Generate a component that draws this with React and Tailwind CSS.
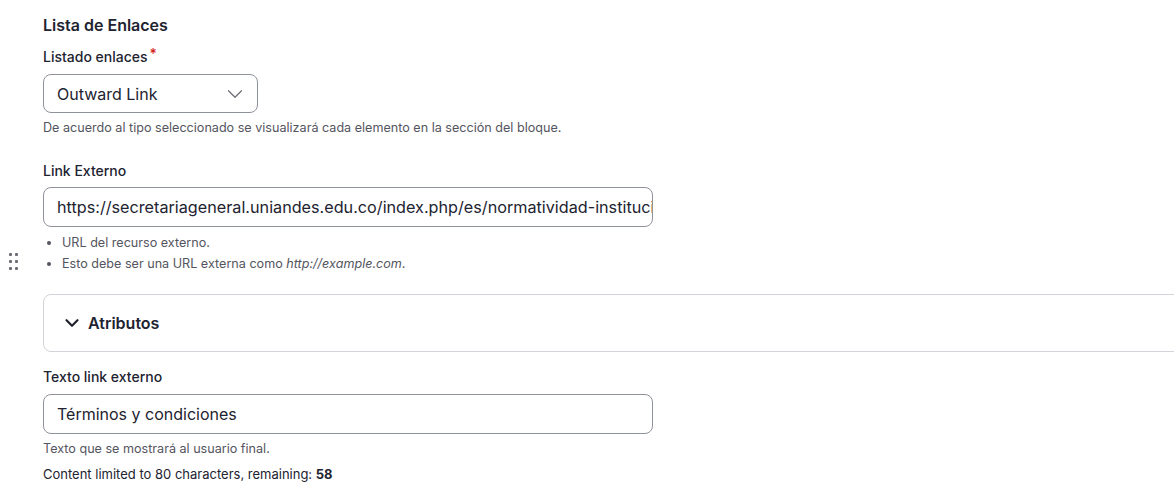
import { ChevronDown } from 'lucide-react'

const Help = ({ children, className = '' }) => (
  <div className={`text-[12.6px] leading-[18px] text-[#545560] ${className}`}>{children}</div>
)

const Label = ({ children, required }) => (
  <div className="text-[14px] leading-[20px] font-medium text-[#222330] flex items-start">
    {children}
    {required && <span className="text-[#d72222] text-[14px] leading-[14px] ml-[2px]">*</span>}
  </div>
)

const DragHandle = () => (
  <div className="grid grid-cols-2 gap-x-[3px] gap-y-[4px] w-[9px]">
    {[0, 1, 2, 3, 4, 5].map((i) => (
      <span key={i} className="block w-[3px] h-[3px] rounded-[1px] bg-[#6b6c74]" />
    ))}
  </div>
)

export default function App() {
  return (
    <div className="min-h-[500px] bg-white font-['Inter','Liberation_Sans',sans-serif] text-[#222330] overflow-hidden">
      <div className="flex">
        {/* drag column */}
        <div className="w-[43px] shrink-0 pl-[9px] pt-[253px]">
          <DragHandle />
        </div>

        {/* form column */}
        <div className="flex-1 pt-[15px]">
          <h4 className="text-[16px] leading-[20px] font-semibold text-[#222330]">Lista de Enlaces</h4>

          <div className="mt-[12px]">
            <Label required>Listado enlaces</Label>
            <div className="mt-[7px] w-[215px] h-[39px] border border-[#8e929c] rounded-[8px] flex items-center justify-between pl-[13px] pr-[9px]">
              <span className="text-[16px] text-[#222330]">Outward Link</span>
              <ChevronDown className="w-[26px] h-[26px] text-[#6b6c74]" strokeWidth={1.1} />
            </div>
            <Help className="mt-[6px]">De acuerdo al tipo seleccionado se visualizará cada elemento en la sección del bloque.</Help>
          </div>

          <div className="mt-[24px]">
            <Label>Link Externo</Label>
            <div className="mt-[6px] w-[610px] h-[40px] border border-[#8e929c] rounded-[8px] flex items-center pl-[13px] overflow-hidden">
              <span className="text-[16.2px] text-[#222330] whitespace-nowrap">
                https://secretariageneral.uniandes.edu.co/index.php/es/normatividad-institucional
              </span>
            </div>
            <ul className="mt-[5px] text-[12.6px] leading-[21px] text-[#545560] list-disc pl-[19px]">
              <li>URL del recurso externo.</li>
              <li>
                Esto debe ser una URL externa como <em>http://example.com</em>.
              </li>
            </ul>
          </div>

          <div className="mt-[20px] -mr-[8px] h-[58px] border border-[#d3d4d9] rounded-[8px] flex items-center pl-[19px]">
            <ChevronDown className="w-[22px] h-[22px] text-[#222330] -ml-[2px]" strokeWidth={2.4} />
            <span className="ml-[5px] text-[16px] font-semibold text-[#222330]">Atributos</span>
          </div>

          <div className="mt-[15px]">
            <Label>Texto link externo</Label>
            <div className="mt-[7px] w-[610px] h-[40px] border border-[#8e929c] rounded-[8px] flex items-center pl-[13px]">
              <span className="text-[16px] text-[#222330]">Términos y condiciones</span>
            </div>
            <Help className="mt-[6px]">Texto que se mostrará al usuario final.</Help>
            <div className="mt-[7px] text-[13px] leading-[18px] text-[#222330]">
              Content limited to 80 characters, remaining: <strong className="font-bold">58</strong>
            </div>
          </div>
        </div>
      </div>
    </div>
  )
}
